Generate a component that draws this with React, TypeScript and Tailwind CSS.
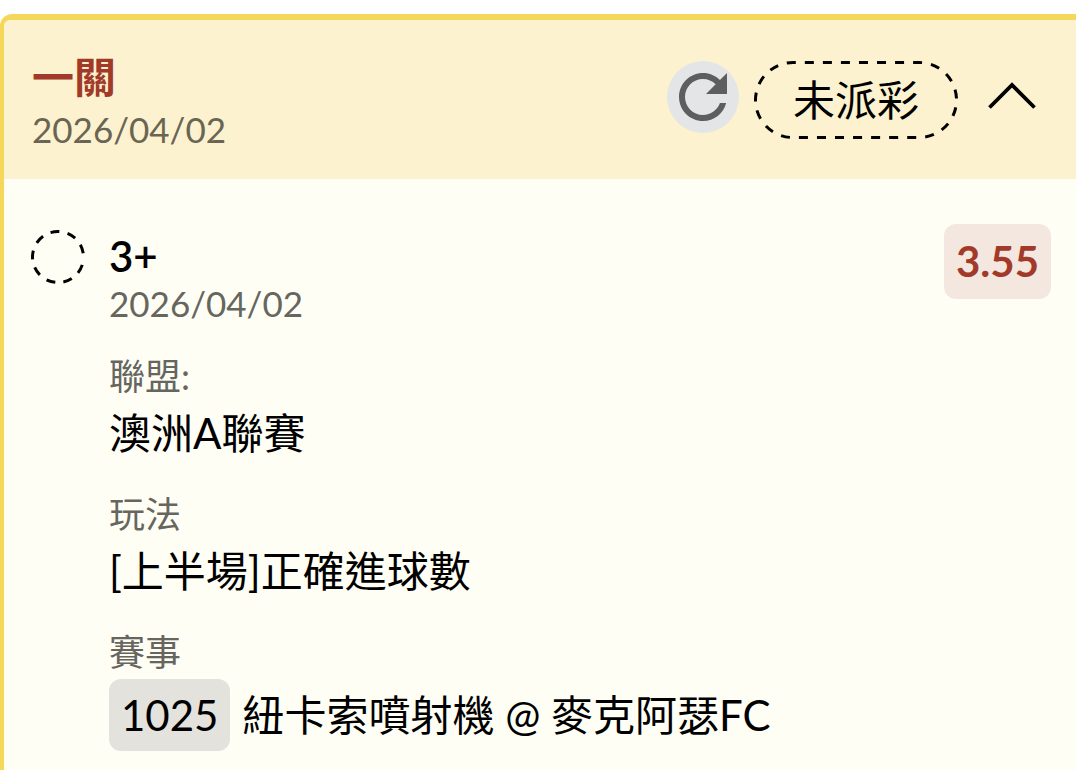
import type { ReactNode } from "react";

function Field({ label, children }: { label: string; children: ReactNode }) {
  return (
    <div className="flex flex-col">
      <dt className="text-4xl leading-[54px] text-[#66665f]">{label}</dt>
      <dd className="flex items-center gap-3 text-[42px] leading-[60px]">{children}</dd>
    </div>
  );
}

function RefreshIcon() {
  return (
    <svg viewBox="0 0 24 24" className="size-[72px]" fill="#5e5e5e" aria-hidden="true">
      <path d="M17.65 6.35C16.2 4.9 14.21 4 12 4c-4.42 0-7.99 3.58-7.99 8s3.57 8 7.99 8c3.73 0 6.84-2.55 7.73-6h-2.08c-.82 2.33-3.04 4-5.65 4-3.31 0-6-2.69-6-6s2.69-6 6-6c1.66 0 3.14.69 4.22 1.78L13 11h7V4l-2.35 2.35z" />
    </svg>
  );
}

function StatusPill({ text }: { text: string }) {
  return (
    <span className="relative flex h-[78px] items-center px-[39px] text-[42px] leading-[60px]">
      <svg className="absolute inset-0 size-full" viewBox="0 0 204 78" preserveAspectRatio="none" fill="none" aria-hidden="true">
        <rect x="1.5" y="1.5" width="201" height="75" rx="37.5" stroke="#000" strokeWidth="3" pathLength="54" strokeDasharray="1 1" strokeDashoffset="0.69" />
      </svg>
      {text}
    </span>
  );
}

export default function App() {
  return (
    <main className="min-h-screen bg-white pt-[14px] text-black [font-family:Lato,'Noto_Sans_CJK_TC',sans-serif]">
      <article className="min-h-[756px] rounded-tl-xl border-t-6 border-l-4 border-[#f5d85a] bg-[#fffef5]">
        <header className="flex items-start justify-between rounded-tl-md bg-[#fcf2cf] pt-[30px] pr-[39px] pb-[25px] pl-7">
          <div>
            <h1 className="text-[42px] leading-[54px] font-bold text-[#a23a2a]">一關</h1>
            <time dateTime="2026-04-02" className="block text-[35px] leading-[50px] text-[#6a6553]">2026/04/02</time>
          </div>
          <div className="flex items-start gap-[15px] pt-[11px]">
            <button type="button" aria-label="重新整理" className="size-[72px] rounded-full bg-[#e4e5e7]">
              <RefreshIcon />
            </button>
            <StatusPill text="未派彩" />
            <button type="button" aria-label="收合" className="ml-3 pt-3">
              <svg viewBox="0 0 52 52" className="size-[52px]" fill="none" stroke="#000" strokeWidth="3.8" aria-hidden="true">
                <path d="M4.5 34.5L27 12L49.5 34.5" />
              </svg>
            </button>
          </div>
        </header>

        <section className="flex items-start pt-[45px] pr-[25px] pl-[26px]">
          <svg viewBox="0 0 56 56" className="mt-[5px] mr-[23px] size-14 shrink-0" fill="none" aria-hidden="true">
            <circle cx="28" cy="28" r="25.5" stroke="#000" strokeWidth="3" strokeDasharray="9 8.3" strokeDashoffset="-8" />
          </svg>
          <div className="flex grow flex-col">
            <h2 className="pt-1 text-[42px] leading-[57px] font-semibold">3+</h2>
            <time dateTime="2026-04-02" className="text-[35px] leading-9 text-[#66665f]">2026/04/02</time>
            <dl className="mt-7 flex flex-col gap-6">
              <Field label="聯盟:">澳洲A聯賽</Field>
              <Field label="玩法">[上半場]正確進球數</Field>
              <Field label="賽事">
                <span className="rounded-xl bg-[#e3e2dc] px-3 py-1.5">1025</span>
                <span>紐卡索噴射機 @ 麥克阿瑟FC</span>
              </Field>
            </dl>
          </div>
          <strong className="rounded-xl bg-[#f3e7e0] px-3 py-2 text-[42px] leading-[59px] font-bold text-[#a23a2a]">3.55</strong>
        </section>
      </article>
    </main>
  );
}
